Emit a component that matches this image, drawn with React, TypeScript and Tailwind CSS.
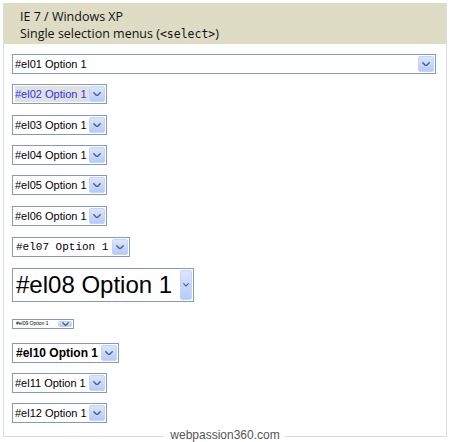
import type { ReactNode } from 'react';

interface SelectProps {
  children: ReactNode;
  box: string;
  text: string;
  arrow?: string;
  chevron?: number;
}

function Chevron({ size = 8 }: { size?: number }) {
  return (
    <svg width={size} height={size * 0.6} viewBox="0 0 10 6" fill="none">
      <path d="M1 1l4 4 4-4" stroke="#4d6185" strokeWidth={1.8} strokeLinecap="round" strokeLinejoin="round" />
    </svg>
  );
}

function XpSelect({ children, box, text, arrow = 'w-[16px]', chevron = 8 }: SelectProps) {
  return (
    <div className={`flex items-stretch border border-[#7f9db9] bg-white p-[1px] ${box}`}>
      <div className={`flex flex-1 items-center pl-[1px] text-black whitespace-nowrap overflow-hidden ${text}`}>
        {children}
      </div>
      <div
        className={`flex items-center justify-center rounded-[2px] border border-[#c3d3fd] bg-gradient-to-b from-[#dbe5fd] to-[#b7cbf9] ${arrow}`}
      >
        <Chevron size={chevron} />
      </div>
    </div>
  );
}

const sans = "font-['Liberation_Sans',Arial,sans-serif]";

export default function App() {
  return (
    <div className="w-[450px] h-[442px] bg-white p-[3px] pb-0">
      <div className="relative h-[434px] border border-[#dcdcdc] border-t-0 flex flex-col">
        <div className="bg-[#dedcc4] px-[16px] pt-[5px] h-[41px] text-[12.5px] leading-[17px] text-[#111] font-['Open_Sans',sans-serif]">
          <div>IE 7 / Windows XP</div>
          <div>
            Single selection menus (
            <span className="font-['DejaVu_Sans_Mono',monospace] text-[11.5px]">&lt;select&gt;</span>)
          </div>
        </div>

        <div className="flex flex-col items-start px-[8px] pt-[10px]">
          <XpSelect box="w-[424px] h-[20px]" text={`${sans} text-[11px]`}>
            #el01 Option 1
          </XpSelect>

          <div className="mt-[10px]">
            <XpSelect box="w-[95px] h-[20px]" text={`${sans} text-[11px]`}>
              <span className="bg-[#e1e1e1] text-[#3030f0] pr-[2px]">#el02 Option 1</span>
            </XpSelect>
          </div>

          <div className="mt-[11px]">
            <XpSelect box="w-[95px] h-[20px]" text={`${sans} text-[11px]`}>
              #el03 Option 1
            </XpSelect>
          </div>
          <div className="mt-[10px]">
            <XpSelect box="w-[95px] h-[20px]" text={`${sans} text-[11px]`}>
              #el04 Option 1
            </XpSelect>
          </div>
          <div className="mt-[10px]">
            <XpSelect box="w-[95px] h-[20px]" text={`${sans} text-[11px]`}>
              #el05 Option 1
            </XpSelect>
          </div>
          <div className="mt-[11px]">
            <XpSelect box="w-[95px] h-[20px]" text={`${sans} text-[11px]`}>
              #el06 Option 1
            </XpSelect>
          </div>

          <div className="mt-[11px]">
            <XpSelect box="w-[118px] h-[20px]" text="font-['Liberation_Mono','Courier_New',monospace] text-[11px] pl-[2px]">
              #el07 Option 1
            </XpSelect>
          </div>

          <div className="mt-[11px]">
            <XpSelect
              box="w-[182px] h-[34px]"
              text={`${sans} text-[24px] pl-[2px]`}
              arrow="w-[12px]"
              chevron={6}
            >
              #el08 Option 1
            </XpSelect>
          </div>

          <div className="mt-[17px]">
            <XpSelect box="w-[62px] h-[10px] p-0" text={`${sans} text-[5px] pl-[2px]`} arrow="w-[14px]" chevron={7}>
              #el09 Option 1
            </XpSelect>
          </div>

          <div className="mt-[14px]">
            <XpSelect box="w-[107px] h-[20px]" text={`${sans} text-[12px] font-bold pl-[2px]`}>
              #el10 Option 1
            </XpSelect>
          </div>

          <div className="mt-[10px]">
            <XpSelect box="w-[95px] h-[20px]" text={`${sans} text-[11px]`}>
              #el11 Option 1
            </XpSelect>
          </div>
          <div className="mt-[10px]">
            <XpSelect box="w-[95px] h-[20px]" text={`${sans} text-[11px]`}>
              #el12 Option 1
            </XpSelect>
          </div>
        </div>

        <div className={`absolute left-1/2 -translate-x-1/2 bottom-[-5px] bg-white px-[6px] text-[12px] leading-[12px] text-[#555] ${sans}`}>
          webpassion360.com
        </div>
      </div>
    </div>
  );
}
